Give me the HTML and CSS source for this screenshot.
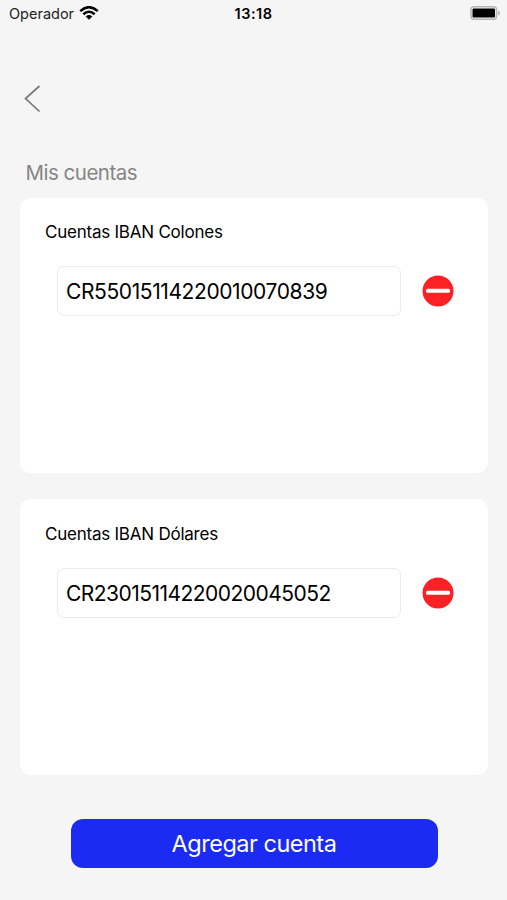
FILE: index.html
```html
<!DOCTYPE html>
<html lang="es">
<head>
<meta charset="utf-8">
<title>Mis cuentas</title>
<link rel="stylesheet" href="styles.css">
</head>
<body>
<header class="status">
  <div class="carrier"><span class="operator">Operador</span>
    <svg class="wifi" width="20" height="14" viewBox="0 0 20 14" fill="none" stroke="#000" stroke-width="2.5"><path d="M1.2 5.2Q10-2.8 18.8 5.2M4.3 8.3Q10 3.2 15.7 8.3"/><path d="M6.7 10.4Q10 7.7 13.3 10.4L10 13.7Z" fill="#000" stroke="none"/></svg>
  </div>
  <time class="clock">13:18</time>
  <svg class="battery" width="31" height="14" viewBox="0 0 31 14"><rect x="1" y=".8" width="25.500" height="12.400" rx="3" fill="none" stroke="#b5b5b5" stroke-width="1.500"/><rect x="2.500" y="2.500" width="22.500" height="9" rx="1.200"/><path d="M28 4.500Q32 7 28 9.500Z" fill="#b5b5b5"/></svg>
</header>
<nav class="nav"><svg width="18" height="28" viewBox="0 0 18 28" fill="none" stroke="#777" stroke-width="1.7"><path d="M15.500 1 1.500 13.500l14 13"/></svg></nav>
<main class="main">
  <h1 class="title">Mis cuentas</h1>
  <section class="card">
    <h2 class="heading">Cuentas IBAN Colones</h2>
    <div class="row"><div class="field">CR55015114220010070839</div>
    <svg class="remove" width="32" height="32" viewBox="0 0 32 32"><circle cx="16" cy="16" r="15.500" fill="#fc2125"/><rect x="4" y="13.800" width="24" height="4" rx="1.500" fill="#fff"/></svg></div>
  </section>
  <section class="card">
    <h2 class="heading">Cuentas IBAN Dólares</h2>
    <div class="row"><div class="field second">CR23015114220020045052</div>
    <svg class="remove" width="32" height="32" viewBox="0 0 32 32"><circle cx="16" cy="16" r="15.500" fill="#fc2125"/><rect x="4" y="13.800" width="24" height="4" rx="1.500" fill="#fff"/></svg></div>
  </section>
  <button class="add">Agregar cuenta</button>
</main>
</body>
</html>
```
FILE: styles.css
```css
* { box-sizing: border-box; }
body { margin: 0; height: 900px; background: #f5f5f5; color: #000; font-family: Inter, sans-serif; overflow: hidden; }
.status { height: 26px; display: grid; grid-template-columns: 1fr auto 1fr; padding: 0 6px 0 9px; align-items: center; }
.carrier { display: flex; align-items: center; gap: 5px; font-size: 14.5px; color: #222; }
.operator { padding-top: 0; }
.clock { font-size: 14.5px; font-weight: 600; letter-spacing: .5px; margin-right: 3px; }
.battery { justify-self: end; }
.nav { height: 56px; margin: 59px 0 0 24px; }
.nav svg { display: block; }
.main { padding: 0 19px 0 20px; }
.title { margin: 18px 0 10.5px 5.5px; height: 28px; line-height: 28px; font-size: 20.5px; letter-spacing: -.5px; font-weight: 400; color: #858585; }
.card { height: 275.5px; margin-bottom: 26px; padding: 22.5px 25px; background: #fff; border-radius: 11px; }
.heading { margin: 0 0 22px; height: 24px; line-height: 24px; font-size: 17px; letter-spacing: -.23px; font-weight: 400; }
.row { display: flex; align-items: center; gap: 21px; padding-left: 12px; }
.field { width: 344px; height: 50px; border: 1px solid #ebebeb; border-radius: 7px; padding: 0 8px; line-height: 49px; font-size: 21px; letter-spacing: -.4px; }
.second { letter-spacing: -.53px; }
.add { display: block; width: 367px; height: 48.5px; margin: 44.5px 0 0 50.5px; padding: 0; border: 0; border-radius: 12px; background: #1b2bf3; color: #fff; font: 400 23.5px Inter, sans-serif; letter-spacing: -.5px; }
```
